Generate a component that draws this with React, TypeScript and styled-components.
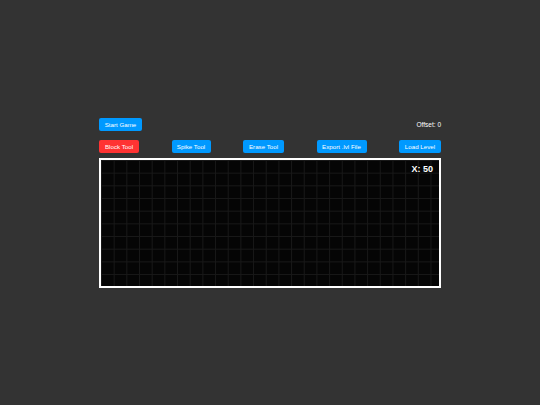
import React, { useState } from 'react'
import styled, { createGlobalStyle } from 'styled-components'

const GlobalStyle = createGlobalStyle`
  html, body {
    margin: 0;
    padding: 0;
    height: 100%;
    background-color: #333333;
  }
  #root {
    height: 100%;
  }
`

const Page = styled.div`
  height: 100vh;
  display: flex;
  justify-content: center;
  align-items: center;
  font-family: 'Liberation Sans', Arial, sans-serif;
`

const Editor = styled.div`
  width: 342px;
  display: flex;
  flex-direction: column;
`

const TopBar = styled.div`
  display: flex;
  justify-content: space-between;
  align-items: center;
  margin-bottom: 9px;
`

const ToolBar = styled.div`
  display: flex;
  justify-content: space-between;
  align-items: center;
  margin-bottom: 5px;
`

const Button = styled.button<{ $active?: boolean; $width: number }>`
  font-family: inherit;
  font-size: 6.2px;
  line-height: 7px;
  color: #ffffff;
  background-color: ${(p) => (p.$active ? '#ff3333' : '#0099ff')};
  border: none;
  border-radius: 2px;
  padding: 3px 0;
  width: ${(p) => p.$width}px;
  cursor: pointer;
`

const OffsetLabel = styled.span`
  font-size: 6.5px;
  color: #ffffff;
`

const Stage = styled.div`
  position: relative;
  height: 126px;
  border: 2px solid #ffffff;
  background-color: #050505;
  background-image: linear-gradient(to right, #181818 1px, transparent 1px),
    linear-gradient(to bottom, #181818 1px, transparent 1px);
  background-size: 12.675px 12.675px;
`

const Coord = styled.span`
  position: absolute;
  top: 4px;
  right: 6px;
  font-size: 9px;
  font-weight: 700;
  color: #ffffff;
`

const tools = [
  { id: 'block', label: 'Block Tool', w: 40 },
  { id: 'spike', label: 'Spike Tool', w: 39 },
  { id: 'erase', label: 'Erase Tool', w: 41 },
  { id: 'export', label: 'Export .lvl File', w: 50 },
  { id: 'load', label: 'Load Level', w: 42 }
]

const App = () => {
  const [tool, setTool] = useState('block')
  const [offset] = useState(0)

  return (
    <>
      <GlobalStyle />
      <Page>
        <Editor>
          <TopBar>
            <Button $width={43}>Start Game</Button>
            <OffsetLabel>Offset: {offset}</OffsetLabel>
          </TopBar>
          <ToolBar>
            {tools.map((t) => (
              <Button
                key={t.id}
                $active={tool === t.id}
                $width={t.w}
                onClick={() => setTool(t.id)}
              >
                {t.label}
              </Button>
            ))}
          </ToolBar>
          <Stage>
            <Coord>X: 50</Coord>
          </Stage>
        </Editor>
      </Page>
    </>
  )
}

export default App
